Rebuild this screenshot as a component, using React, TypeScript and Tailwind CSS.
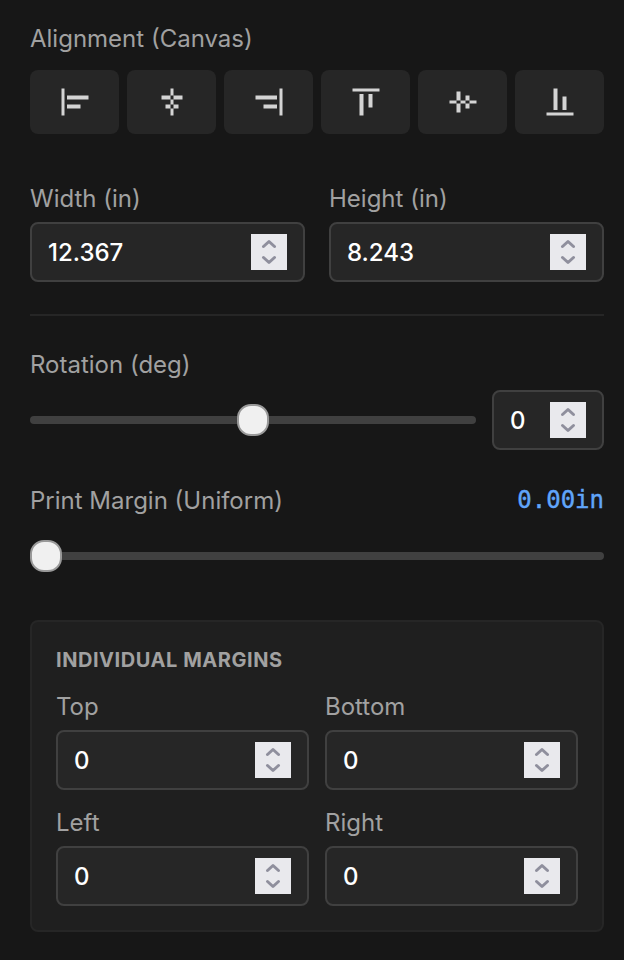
import { useState } from 'react';

const ALIGNMENTS = [
  { id: 'left', d: 'M1.5 .5h3v27h-3zM7 7.5h21.5v4H7zM7 16.5h13.5v4H7z' },
  { id: 'center', d: 'M13.5 .5h3v27h-3zM4.5 7.5h21v4h-21zM8.5 16.5h13v4h-13z' },
  { id: 'right', d: 'M25.5 .5h3v27h-3zM1.5 7.5H23v4H1.5zM9.5 16.5H23v4H9.5z' },
  { id: 'top', d: 'M1.5 .5h27v3h-27zM8.5 6h4v21.5h-4zM17.5 6h4v13.5h-4z' },
  { id: 'middle', d: 'M1.5 12.5h27v3h-27zM8.5 3.5h4v21h-4zM17.5 7.5h4v13h-4z' },
  { id: 'bottom', d: 'M1.5 24.5h27v3h-27zM8.5 .5h4V22h-4zM17.5 8.5h4V22h-4z' },
];

function Label({ children }: { children: string }) {
  return <label className="block h-8 text-2xl leading-[34px] whitespace-nowrap text-neutral-400">{children}</label>;
}

function NumberField({ value, className = '' }: { value: string; className?: string }) {
  const [text, setText] = useState(value);

  return (
    <div className={`flex h-[60px] items-center rounded-lg border-2 border-neutral-700 bg-neutral-800 px-4 ${className}`}>
      <input
        value={text}
        onChange={(e) => setText(e.target.value)}
        className="min-w-0 flex-1 bg-transparent pt-0.5 text-2xl leading-8 font-medium text-white outline-none"
      />
      <div className="flex size-9 shrink-0 items-center justify-center bg-[#e9e9ed]">
        <svg width="16" height="26" viewBox="0 0 16 26" fill="none" stroke="#8f8f9d" strokeWidth="3" strokeLinecap="round" strokeLinejoin="round">
          <path d="M2.5 7.5 8 2.5l5.5 5M2.5 18.5 8 23.5l5.5-5" />
        </svg>
      </div>
    </div>
  );
}

function Slider({ percent }: { percent: number }) {
  return (
    <div className="relative flex h-8 flex-1 items-center">
      <div className="h-2 w-full rounded-full bg-neutral-700" />
      <div
        className="absolute top-0 size-8 rounded-[14px] border-2 border-[#999] bg-[#f0f0f0]"
        style={{ left: `calc((100% - 32px) * ${percent / 100})` }}
      />
    </div>
  );
}

export default function App() {
  return (
    <div className="h-[960px] w-[624px] overflow-hidden bg-neutral-900 pt-[22px] pr-5 pl-[30px] font-['Inter',sans-serif]">
      {/* Alignment */}
      <Label>Alignment (Canvas)</Label>
      <div className="mt-4 grid grid-cols-6 gap-2">
        {ALIGNMENTS.map((a) => (
          <button key={a.id} aria-label={a.id} className="flex h-16 items-center justify-center rounded-lg bg-neutral-800">
            <svg width="29" height="28" viewBox="0 0 29 28" className="fill-neutral-300">
              <path fillRule="evenodd" d={a.d} />
            </svg>
          </button>
        ))}
      </div>

      {/* Size */}
      <div className="mt-12 grid grid-cols-2 gap-6">
        <div className="space-y-2">
          <Label>Width (in)</Label>
          <NumberField value="12.367" />
        </div>
        <div className="space-y-2">
          <Label>Height (in)</Label>
          <NumberField value="8.243" />
        </div>
      </div>

      {/* Rotation */}
      <div className="mt-8 border-t-2 border-neutral-800 pt-8">
        <Label>Rotation (deg)</Label>
        <div className="mt-2.5 flex items-center gap-4">
          <Slider percent={50} />
          <NumberField value="0" className="w-28" />
        </div>
      </div>

      {/* Print margin */}
      <div className="mt-[34px] mb-6 flex items-center justify-between">
        <Label>Print Margin (Uniform)</Label>
        <span className="font-['DejaVu_Sans_Mono',monospace] text-2xl leading-8 text-[#60a5fa] [-webkit-text-stroke:0.4px]">0.00in</span>
      </div>
      <div className="flex">
        <Slider percent={0} />
      </div>

      {/* Individual margins */}
      <div className="mt-12 rounded-lg border-2 border-neutral-800 bg-[#1f1f1f] p-6">
        <h3 className="h-7 text-[20px] leading-[29px] font-bold tracking-[0.55px] text-neutral-400 uppercase">Individual Margins</h3>
        <div className="mt-4 grid grid-cols-2 gap-4">
          {['Top', 'Bottom', 'Left', 'Right'].map((side) => (
            <div key={side} className="space-y-2">
              <Label>{side}</Label>
              <NumberField value="0" />
            </div>
          ))}
        </div>
      </div>
    </div>
  );
}
